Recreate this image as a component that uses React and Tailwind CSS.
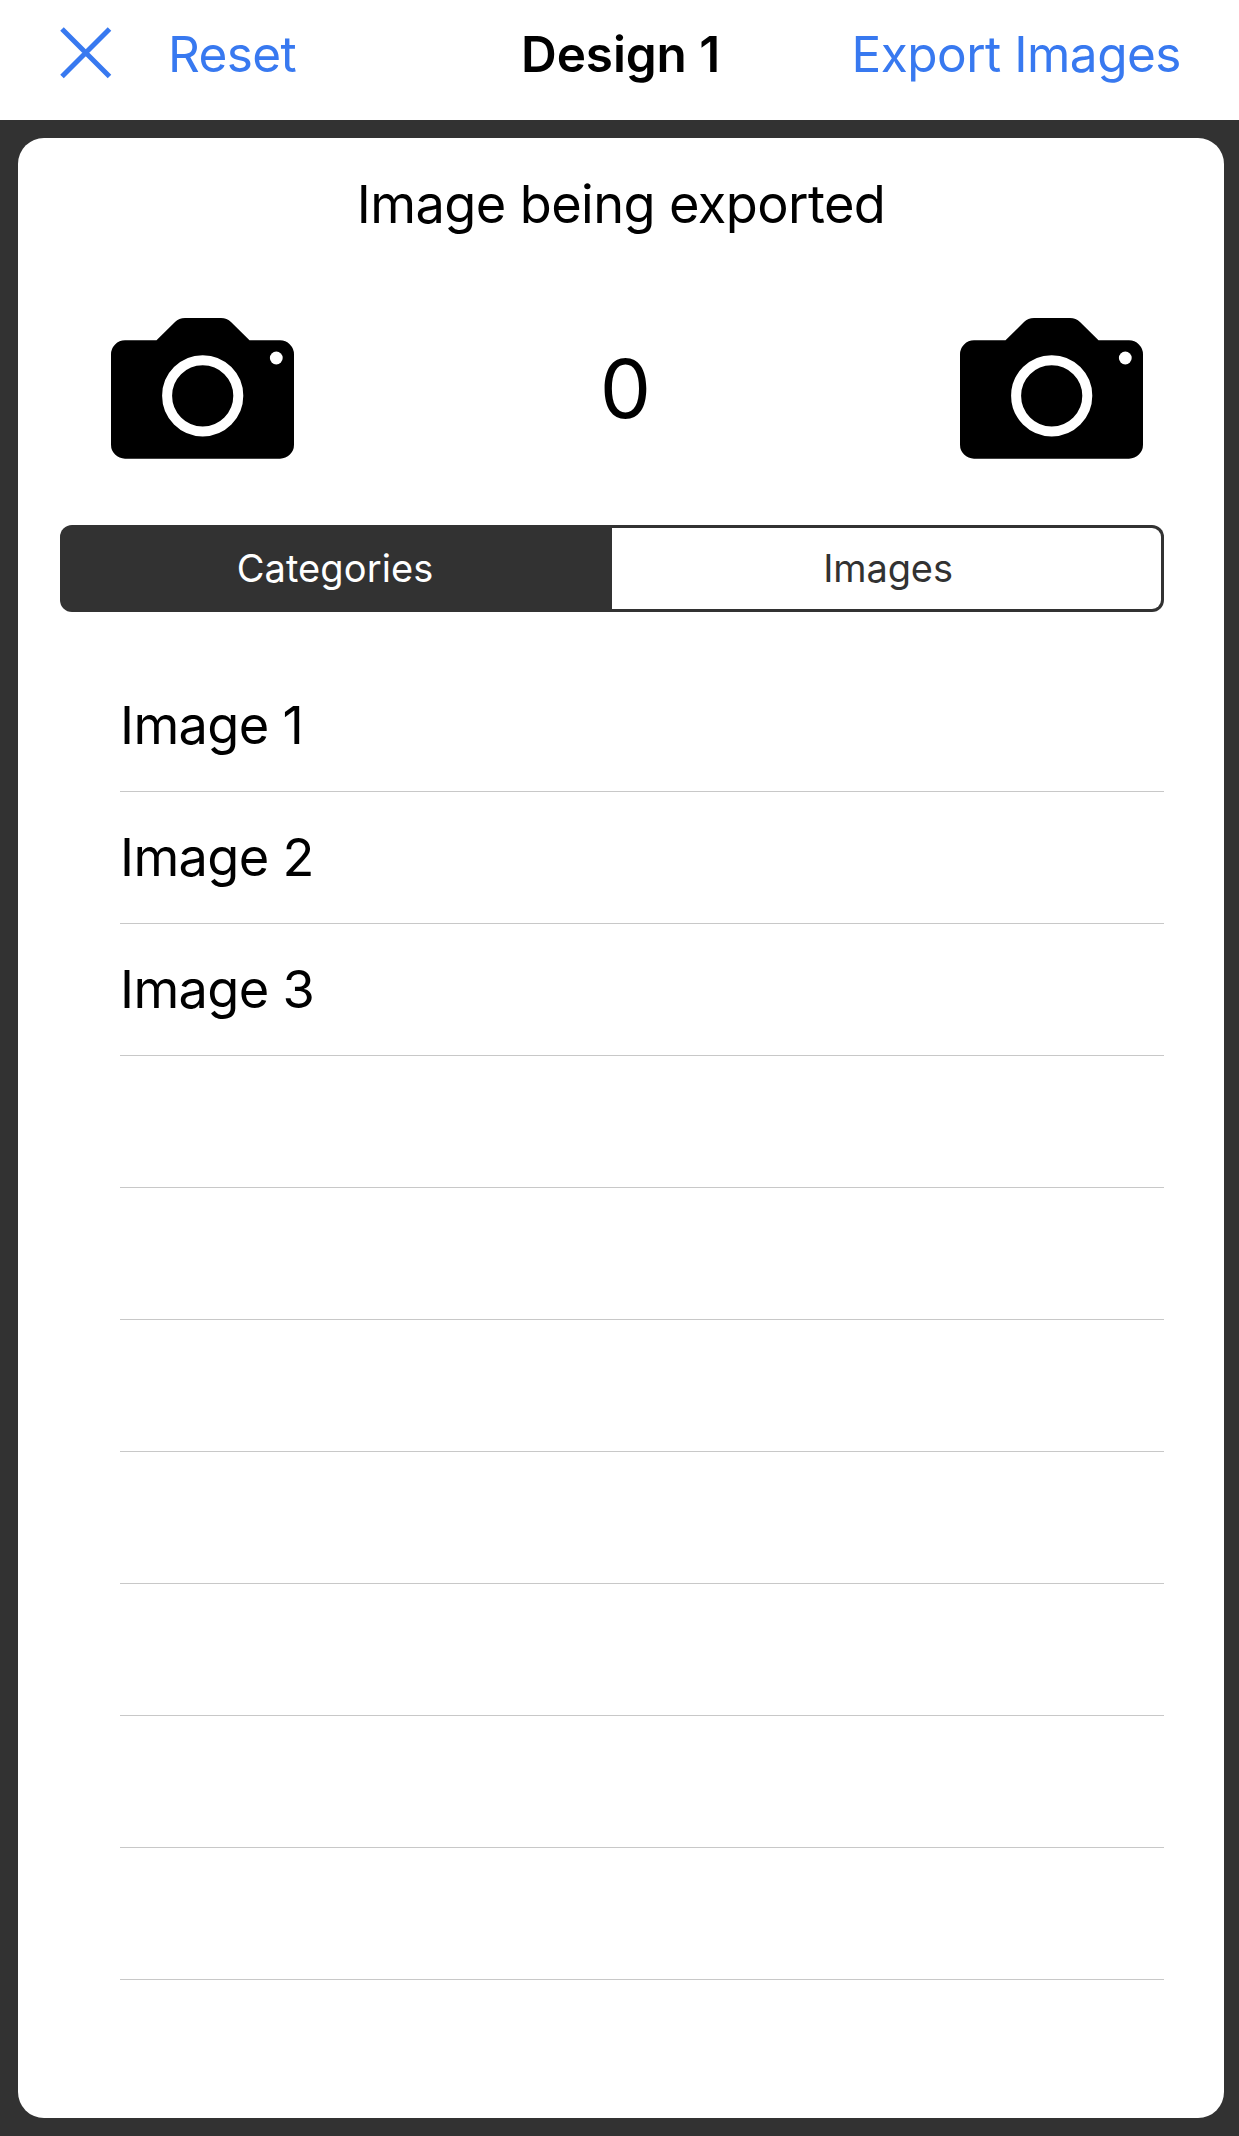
function CloseIcon() {
  return (
    <svg width="52" height="52" viewBox="0 0 52 52" fill="none" stroke="currentColor" strokeWidth="5" aria-hidden="true">
      <path d="M2 2 L49.5 49.5 M49.5 2 L2 49.5" />
    </svg>
  );
}

function CameraIcon() {
  return (
    <svg width="183" height="141" viewBox="0 0 183 141" aria-hidden="true">
      <path
        d="M14 22.3 H45.5 L64 4 Q68 0 74 0 H110 Q116 0 120 4 L138.5 22.3 H169 A14 14 0 0 1 183 36.3 V126.7 A14 14 0 0 1 169 140.7 H14 A14 14 0 0 1 0 126.7 V36.3 A14 14 0 0 1 14 22.3 Z"
        fill="#000"
      />
      <circle cx="91.7" cy="77.8" r="35.6" fill="none" stroke="#fff" strokeWidth="10" />
      <circle cx="165.3" cy="40" r="6.4" fill="#fff" />
    </svg>
  );
}

const rows = ["Image 1", "Image 2", "Image 3", "", "", "", "", "", "", ""];

export default function App() {
  return (
    <div className="flex h-[2136px] w-[1239px] flex-col bg-[#323232] font-['Inter',sans-serif] text-black">
      <header className="grid h-[120px] grid-cols-[1fr_auto_1fr] items-center bg-white pr-[58px] pb-3 pl-[60px] text-[49.5px] leading-[60px]">
        <div className="flex items-center text-[#3879f0]">
          <button aria-label="Close" className="-mt-0.5">
            <CloseIcon />
          </button>
          <button className="ml-14 tracking-[-0.6px]">Reset</button>
        </div>
        <h1 className="font-semibold tracking-[-0.1px]">Design 1</h1>
        <button className="justify-self-end tracking-[-0.5px] whitespace-nowrap text-[#3879f0]">Export Images</button>
      </header>

      <main className="mt-[18px] mr-[15px] mb-[18px] ml-[18px] flex flex-1 flex-col rounded-[26px] bg-white pt-[34px]">
        <h2 className="text-center text-[52.3px] leading-[64px] tracking-[-0.58px]">Image being exported</h2>

        <div className="mt-[82px] mr-[81px] ml-[93px] flex h-[141px] items-center justify-between">
          <CameraIcon />
          <span className="mr-[3px] text-[81.5px] leading-[100px]">0</span>
          <CameraIcon />
        </div>

        <div className="mt-[66px] mr-[60px] ml-[42px] grid h-[87px] grid-cols-2 rounded-[12px] bg-[#323232] py-[3px] text-[38px] leading-[46px]">
          <button className="pr-0.5 pb-0.5 tracking-[0.1px] text-white">Categories</button>
          <button className="mr-[3px] rounded-r-[9px] bg-white pb-0.5 pl-[3px] tracking-[-0.1px] text-[#323232]">Images</button>
        </div>

        <ul className="mt-12 mr-[60px] ml-[102px]">
          {rows.map((label, i) => (
            <li key={i} className="flex h-[132px] items-center border-b border-[#c8c8c8] text-[52.3px] leading-[63px] tracking-[-0.65px]">
              {label}
            </li>
          ))}
        </ul>
      </main>
    </div>
  );
}
